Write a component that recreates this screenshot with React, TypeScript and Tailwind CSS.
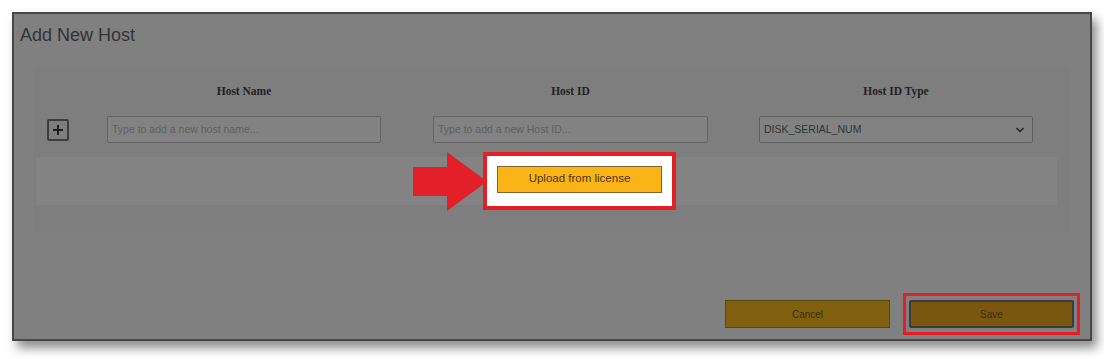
import React from 'react';
import { ChevronDown } from 'lucide-react';

const sans = "font-['Liberation_Sans',Arial,sans-serif]";
const serif = "font-['Liberation_Serif','Times_New_Roman',serif]";

// Red annotation arrow pointing right
const RedArrow: React.FC = () => (
  <svg width="74" height="59" viewBox="0 0 74 59" className="-mr-[4px] shrink-0">
    <rect x="0" y="15" width="36" height="29" fill="#e3202a" />
    <polygon points="34,0 74,29.5 34,59" fill="#e3202a" />
  </svg>
);

const App: React.FC = () => {
  return (
    <div className={`min-h-screen w-[1104px] h-[359px] bg-white pl-[12px] pt-[12px] ${sans}`}>
      {/* Dialog */}
      <div className="flex flex-col w-[1080px] h-[329px] bg-[#808080] border-2 border-[#474747] shadow-[5px_7px_10px_rgba(0,0,0,0.45)]">
        <h1 className="pl-[6px] pt-[10px] text-[18px] leading-[22px] text-[#333333]">Add New Host</h1>

        {/* Hosts panel */}
        <div className="mx-[20px] mt-[22px] h-[164px] bg-[#7e7e7e] pt-[17px]">
          {/* Column headers */}
          <div className={`flex pl-[13px] h-[14px] items-center text-[11.5px] font-bold text-[#222222] ${serif}`}>
            <div className="w-[22px]" />
            <div className="ml-[38px] w-[274px] text-center">Host Name</div>
            <div className="ml-[52px] w-[275px] text-center">Host ID</div>
            <div className="ml-[51px] w-[274px] text-center">Host ID Type</div>
          </div>

          {/* Input row */}
          <div className="flex pl-[13px] mt-[17px] h-[27px] items-center">
            <button className="w-[22px] h-[22px] flex items-center justify-center border-2 border-[#3d3d3d] rounded-[2px] text-[#1f1f1f]">
              <svg width="12" height="12" viewBox="0 0 12 12">
                <path d="M6 1v10M1 6h10" stroke="#1f1f1f" strokeWidth="2" />
              </svg>
            </button>
            <div className="ml-[38px] w-[274px] h-[27px] flex items-center px-[4px] border border-[#656565] rounded-[2px] bg-[#828282] text-[10.5px] text-[#606060]">
              Type to add a new host name...
            </div>
            <div className="ml-[52px] w-[275px] h-[27px] flex items-center px-[4px] border border-[#656565] rounded-[2px] bg-[#828282] text-[10.5px] text-[#606060]">
              Type to add a new Host ID...
            </div>
            <div className="ml-[51px] w-[274px] h-[27px] flex items-center justify-between pl-[4px] pr-[6px] border border-[#5f5f5f] rounded-[2px] bg-[#828282] text-[10.5px] text-[#2d3535]">
              <span>DISK_SERIAL_NUM</span>
              <ChevronDown size={12} strokeWidth={3.5} color="#262626" />
            </div>
          </div>

          {/* Upload strip */}
          <div className="ml-[2px] mr-[13px] mt-[14px] h-[48px] bg-[#838383] flex items-center">
            <div className="ml-[377px] flex items-center">
              <RedArrow />
              <div className="border-4 border-[#e31e24] bg-white px-[10px] pt-[9px] pb-[13px]">
                <button className="w-[165px] h-[27px] bg-[#fbb418] border border-[#7f6330] text-[11.5px] text-[#4d3305]">
                  Upload from license
                </button>
              </div>
            </div>
          </div>
        </div>

        {/* Footer */}
        <div className="flex justify-end items-center pr-[10px] mt-[61px]">
          <button className="w-[165px] h-[28px] bg-[#80600f] border border-[#5e4410] text-[10px] text-[#3e2d0a]">
            Cancel
          </button>
          <div className="ml-[13px] border-[3px] border-[#e31e24] px-[3px] py-[4px]">
            <button className="w-[165px] h-[28px] bg-[#7a570f] border-2 border-[#3b3b3b] rounded-[2px] text-[10px] text-[#3e2d0a]">
              Save
            </button>
          </div>
        </div>
      </div>
    </div>
  );
};

export default App;
